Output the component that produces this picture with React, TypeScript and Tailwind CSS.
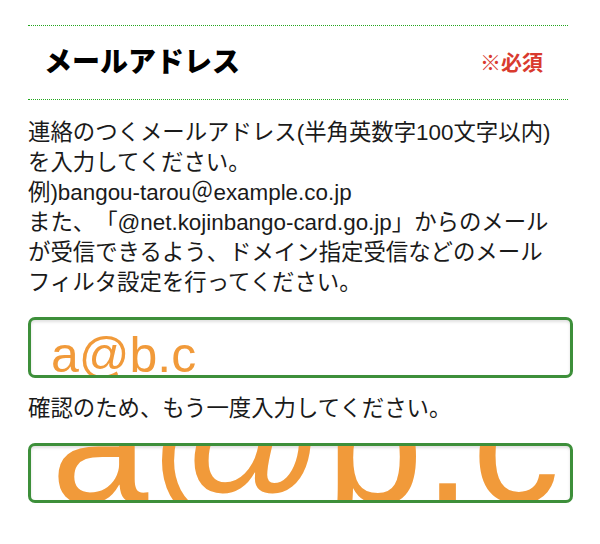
const font = { fontFamily: '"Liberation Sans", "Noto Sans CJK JP", sans-serif' };

const EmailField = () => {
  return (
    <div className="min-h-screen bg-white text-[#1a1a1a] [text-spacing-trim:space-all]" style={font}>
      <div className="ml-[28px] w-[545px] pt-[25px]">
        {/* Header */}
        <div className="flex h-[75px] w-[540px] items-center justify-between border-y border-dotted border-[#23a61e] pl-[16px] pr-[25px]">
          <h2 className="text-[28px] font-black leading-none text-black">メールアドレス</h2>
          <span className="text-[21px] font-bold leading-none text-[#d93a2e]">※必須</span>
        </div>

        {/* Description */}
        <p className="mt-[18px] text-[22.4px] leading-[30px]">
          連絡のつくメールアドレス(半角英数字100文字以内)
          <br />
          を入力してください。
          <br />
          例)bangou-tarou＠example.co.jp
          <br />
          また、「@net.kojinbango-card.go.jp」からのメール
          <br />
          が受信できるよう、ドメイン指定受信などのメール
          <br />
          フィルタ設定を行ってください。
        </p>

        {/* Input */}
        <div className="mt-[19px] h-[61px] overflow-hidden rounded-[7px] border-[3px] border-[#3d8f3a] pl-[20px] shadow-[inset_0_2px_3px_rgba(0,0,0,0.12)]">
          <div className="pt-[10px] text-[50px] leading-[50px] text-[#f19a3a]">a@b.c</div>
        </div>

        <p className="mt-[16px] text-[22.4px] leading-[30px]">確認のため、もう一度入力してください。</p>

        {/* Confirm input */}
        <div className="mt-[19px] h-[60px] overflow-hidden rounded-[7px] border-[3px] border-[#3d8f3a] pl-[20px] shadow-[inset_0_2px_3px_rgba(0,0,0,0.12)]">
          <div className="mt-[-92px] whitespace-nowrap text-[175px] leading-[175px] text-[#f19a3a]">a@b.c</div>
        </div>
      </div>
    </div>
  );
};

export default function App() {
  return <EmailField />;
}
